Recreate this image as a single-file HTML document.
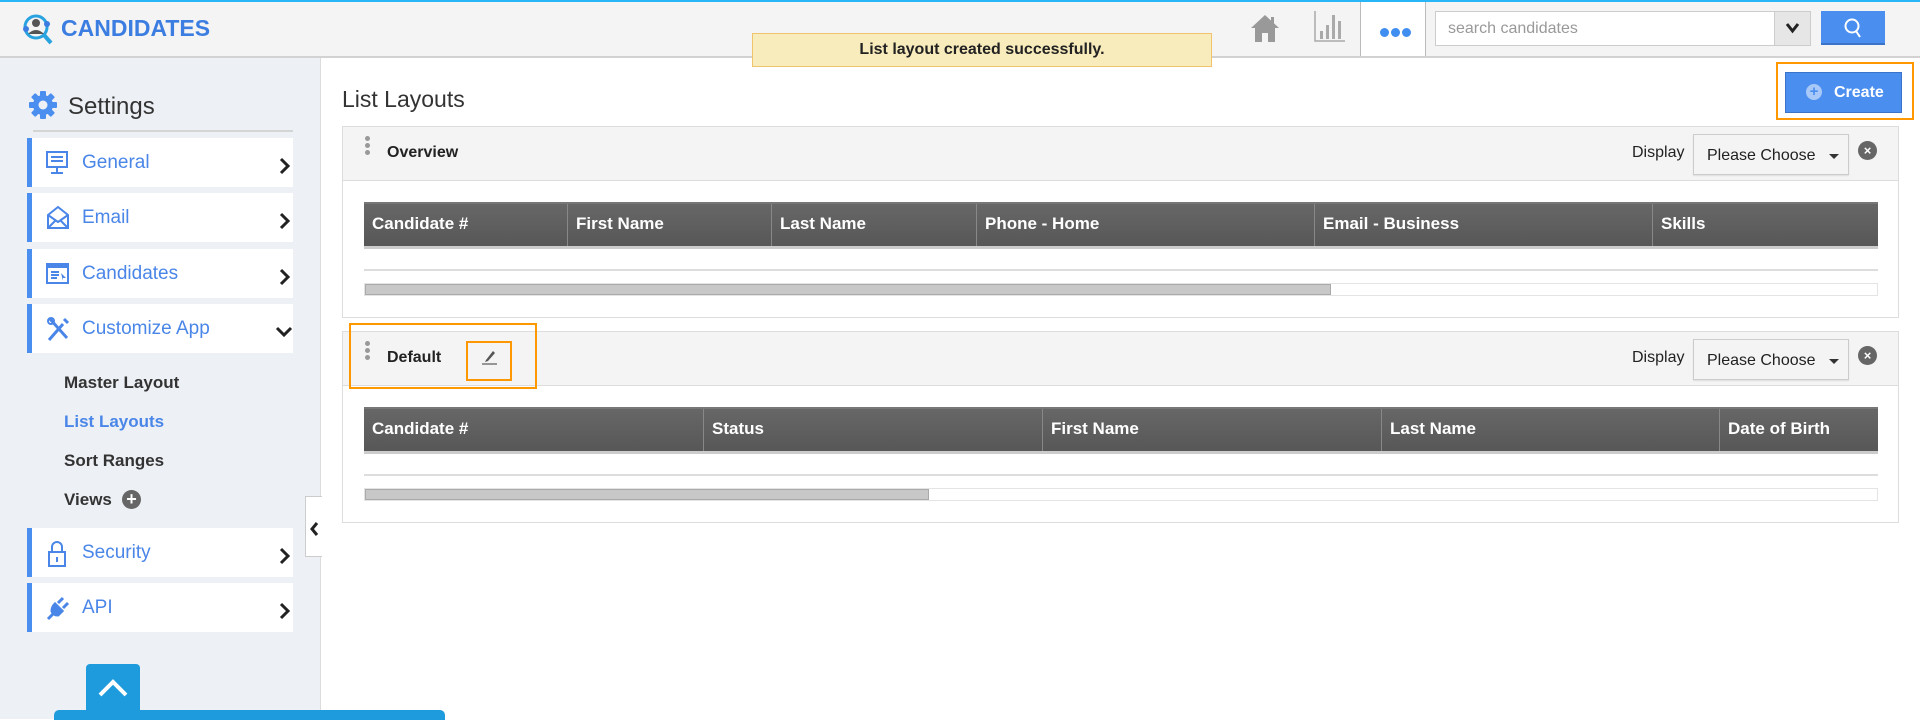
<!DOCTYPE html>
<html><head><meta charset="utf-8"><style>
*{box-sizing:border-box;margin:0;padding:0}
body{width:1920px;height:719px;overflow:hidden;background:#fff;font-family:"Liberation Sans",Arial,sans-serif;position:relative}
.a{position:absolute}
.hdr{left:0;top:0;width:1920px;height:58px;background:#f4f4f4;border-top:2px solid #29b6f6;border-bottom:2px solid #d2d2d2}
.side{left:0;top:58px;width:321px;height:661px;background:#edf0f5;border-right:1px solid #dcdcdc}
.mi{left:27px;width:266px;height:49px;background:#fff;border-left:5px solid #4a8ef0;color:#4a86e8;font-size:19px}
.mi span{position:absolute;left:50px;top:14px}
.mi svg.ic{position:absolute;left:14px;top:12px}
.mi .chev{position:absolute;left:247px;top:19px}
.sub{left:64px;font-size:17px;font-weight:bold;color:#333}
.panel{left:342px;width:1557px;border:1px solid #ddd;background:#fff}
.ph{position:absolute;left:0;top:0;width:100%;height:54px;background:#f4f4f4;border-bottom:1px solid #ddd}
.th{position:absolute;left:21px;width:1514px;height:47px;background:linear-gradient(#676767,#575757);border-top:2px solid #777;border-bottom:3px solid #ccc}
.th div{position:absolute;top:0;height:42px;color:#fff;font-weight:bold;font-size:17px;line-height:40px;padding-left:8px;border-left:1px solid #888}
.sel{position:absolute;width:156px;height:41px;border:1px solid #ccc;background:#f4f4f4;font-size:16px;color:#222;padding:12px 0 0 13px;box-shadow:0 1px 1px #ddd}
.sel:after{content:"";position:absolute;right:9px;top:19px;border:5px solid transparent;border-top:5px solid #333}
.disp{position:absolute;font-size:16px;color:#222}
.xc{position:absolute;width:19px;height:19px;border-radius:50%;background:#666;color:#fff;font-size:13px;font-weight:bold;text-align:center;line-height:19px}
.dots{position:absolute;left:22px;width:5px}
.dots i{display:block;width:5px;height:5px;border-radius:50%;background:#999;margin-bottom:2px}
.ptitle{position:absolute;left:44px;font-size:16px;font-weight:bold;color:#222}
.ln{position:absolute;left:21px;width:1514px;height:2px;background:#ddd}
.sb{position:absolute;left:21px;width:1514px;height:13px;border:1px solid #e4e4e4;background:#fff}
.sb i{position:absolute;left:0;top:0;height:11px;background:#c8c8c8;border:1px solid #aaa}
</style></head><body>
<div class="a hdr"></div>
<svg class="a" style="left:20px;top:12px" width="36" height="34" viewBox="0 0 36 34"><circle cx="16" cy="15" r="11" fill="none" stroke="#29a3e0" stroke-width="3"/><circle cx="16" cy="11" r="4" fill="#555"/><path d="M8 22 Q16 14 24 22Z" fill="#555"/><line x1="24" y1="23" x2="31" y2="31" stroke="#29a3e0" stroke-width="4"/><circle cx="6" cy="17" r="3" fill="#3b7de0"/><circle cx="27" cy="12" r="3" fill="#3b7de0"/></svg>
<div class="a" style="left:61px;top:15px;font-size:23px;font-weight:bold;color:#3b7de0">CANDIDATES</div>
<div class="a" style="left:752px;top:33px;width:460px;height:34px;background:#f9ecbc;border:1px solid #f0c36d;font-size:16px;font-weight:bold;color:#222;text-align:center;line-height:32px">List layout created successfully.</div>
<svg class="a" style="left:1249px;top:13px" width="32" height="30" viewBox="0 0 32 30"><path d="M16 2 L30 15 H26 V29 H19 V20 H13 V29 H6 V15 H2 Z" fill="#999"/><rect x="22" y="4" width="3" height="7" fill="#999"/></svg>
<svg class="a" style="left:1314px;top:11px" width="32" height="32" viewBox="0 0 32 32"><path d="M1 0 V30 H31" fill="none" stroke="#aaa" stroke-width="1.5"/><rect x="6" y="20" width="3" height="8" fill="#aaa"/><rect x="12" y="14" width="3" height="14" fill="#aaa"/><rect x="18" y="4" width="3" height="24" fill="#aaa"/><rect x="24" y="10" width="3" height="18" fill="#aaa"/></svg>
<div class="a" style="left:1360px;top:2px;width:66px;height:54px;background:#fff;border-left:1px solid #bbb;border-right:1px solid #bbb"></div>
<div class="a" style="left:1380px;top:24px"><span style="display:inline-block;width:9px;height:9px;border-radius:50%;background:#3f8ef0;margin-right:2px"></span><span style="display:inline-block;width:9px;height:9px;border-radius:50%;background:#3f8ef0;margin-right:2px"></span><span style="display:inline-block;width:9px;height:9px;border-radius:50%;background:#3f8ef0"></span></div>
<div class="a" style="left:1435px;top:11px;width:340px;height:35px;background:#fff;border:1px solid #ccc;font-size:16px;color:#999;padding:8px 12px">search candidates</div>
<div class="a" style="left:1774px;top:11px;width:37px;height:35px;background:#e6e6e6;border:1px solid #ccc"></div>
<svg class="a" style="left:1785px;top:22px" width="15" height="12" viewBox="0 0 15 12"><path d="M2 2 L7.5 9 L13 2" fill="none" stroke="#222" stroke-width="3"/></svg>
<div class="a" style="left:1821px;top:11px;width:64px;height:34px;background:#4a8ef0;border-bottom:2px solid #3a73c8"></div>
<svg class="a" style="left:1843px;top:17px" width="20" height="22" viewBox="0 0 20 22"><circle cx="9" cy="9" r="6.5" fill="none" stroke="#fff" stroke-width="2"/><line x1="13" y1="14" x2="17" y2="20" stroke="#fff" stroke-width="2"/></svg>

<div class="a side"></div>
<svg class="a" style="left:28px;top:90px" width="30" height="30" viewBox="0 0 30 30"><g fill="#4a8ef0"><circle cx="15" cy="15" r="10"/><rect x="12" y="1" width="6" height="28" rx="1"/><rect x="1" y="12" width="28" height="6" rx="1"/><rect x="12" y="1" width="6" height="28" rx="1" transform="rotate(45 15 15)"/><rect x="12" y="1" width="6" height="28" rx="1" transform="rotate(-45 15 15)"/></g><circle cx="15" cy="15" r="4.5" fill="#edf0f5"/></svg>
<div class="a" style="left:68px;top:93px;font-size:24px;color:#333">Settings</div>
<div class="a" style="left:33px;top:130px;width:260px;height:2px;background:#d4d4d4"></div>

<div class="a mi" style="top:138px"><svg class="ic" width="22" height="26" viewBox="0 0 22 26"><rect x="1" y="2" width="20" height="15" fill="none" stroke="#4a86e8" stroke-width="2"/><path d="M5 7H17M5 11H17M11 17V23M5 23H17" stroke="#4a86e8" stroke-width="2"/></svg><span>General</span><svg class="chev" width="12" height="18" viewBox="0 0 12 18"><path d="M2 2 L9 9 L2 16" fill="none" stroke="#222" stroke-width="3"/></svg></div>
<div class="a mi" style="top:193px"><svg class="ic" width="24" height="26" viewBox="0 0 24 26"><path d="M2 10 L12 2 L22 10 V23 H2 Z M2 10 L12 17 L22 10 M2 23 L10 15 M22 23 L14 15" fill="none" stroke="#4a86e8" stroke-width="2"/></svg><span>Email</span><svg class="chev" width="12" height="18" viewBox="0 0 12 18"><path d="M2 2 L9 9 L2 16" fill="none" stroke="#222" stroke-width="3"/></svg></div>
<div class="a mi" style="top:249px"><svg class="ic" width="24" height="26" viewBox="0 0 24 26"><rect x="1" y="3" width="21" height="19" fill="none" stroke="#4a86e8" stroke-width="2"/><rect x="1" y="3" width="21" height="4" fill="#4a86e8"/><path d="M5 11H13M5 14H13M5 17H11" stroke="#4a86e8" stroke-width="2"/><path d="M15 12 L20 17 L17 17 L17 20Z" fill="#4a86e8"/></svg><span>Candidates</span><svg class="chev" width="12" height="18" viewBox="0 0 12 18"><path d="M2 2 L9 9 L2 16" fill="none" stroke="#222" stroke-width="3"/></svg></div>
<div class="a mi" style="top:304px"><svg class="ic" width="24" height="26" viewBox="0 0 24 26"><path d="M3 24 L17 8 M4 3 L21 22 M18 3 L22 7" stroke="#4a86e8" stroke-width="3" fill="none"/><circle cx="5" cy="5" r="3" fill="none" stroke="#4a86e8" stroke-width="2"/></svg><span>Customize App</span><svg class="chev" style="left:243px;top:22px" width="18" height="12" viewBox="0 0 18 12"><path d="M2 2 L9 9 L16 2" fill="none" stroke="#222" stroke-width="3"/></svg></div>

<div class="a sub" style="top:373px">Master Layout</div>
<div class="a sub" style="top:412px;color:#4a86e8">List Layouts</div>
<div class="a sub" style="top:451px">Sort Ranges</div>
<div class="a sub" style="top:490px">Views</div>
<div class="a" style="left:122px;top:490px;width:19px;height:19px;border-radius:50%;background:#666;color:#fff;font-weight:bold;font-size:18px;text-align:center;line-height:19px">+</div>

<div class="a mi" style="top:528px"><svg class="ic" width="22" height="28" viewBox="0 0 22 28"><path d="M6 12 V7 A5 5 0 0 1 16 7 V12" fill="none" stroke="#4a86e8" stroke-width="2"/><rect x="3" y="12" width="16" height="14" fill="none" stroke="#4a86e8" stroke-width="2"/><path d="M11 17V22" stroke="#4a86e8" stroke-width="2"/></svg><span>Security</span><svg class="chev" width="12" height="18" viewBox="0 0 12 18"><path d="M2 2 L9 9 L2 16" fill="none" stroke="#222" stroke-width="3"/></svg></div>
<div class="a mi" style="top:583px"><svg class="ic" width="24" height="26" viewBox="0 0 24 26"><path d="M2 24 L8 18 M9 9 L16 16 L12 20 Q7 20 6 16 Q6 12 9 9 Z M12 8 L17 3 M17 13 L22 8" stroke="#4a86e8" stroke-width="3" fill="#4a86e8"/></svg><span>API</span><svg class="chev" width="12" height="18" viewBox="0 0 12 18"><path d="M2 2 L9 9 L2 16" fill="none" stroke="#222" stroke-width="3"/></svg></div>

<div class="a" style="left:305px;top:496px;width:17px;height:61px;background:#fff;border:1px solid #ccc;border-right:none"></div>
<svg class="a" style="left:309px;top:521px" width="10" height="16" viewBox="0 0 10 16"><path d="M8 2 L3 8 L8 14" fill="none" stroke="#222" stroke-width="3"/></svg>
<div class="a" style="left:86px;top:664px;width:54px;height:50px;background:#1e9bdc;border-radius:4px 4px 0 0"></div>
<svg class="a" style="left:97px;top:678px" width="32" height="20" viewBox="0 0 32 20"><path d="M3 17 L16 4 L29 17" fill="none" stroke="#fff" stroke-width="4"/></svg>
<div class="a" style="left:54px;top:710px;width:391px;height:10px;background:#1e9bdc;border-radius:5px 5px 0 0"></div>

<div class="a" style="left:342px;top:86px;font-size:23px;color:#333">List Layouts</div>
<div class="a" style="left:1776px;top:62px;width:138px;height:58px;border:2px solid #ff9800"></div>
<div class="a" style="left:1785px;top:72px;width:117px;height:41px;background:#4a8ef0;border:1px solid #3a73c8;color:#fff;font-weight:bold;font-size:16px;padding:11px 0 0 48px">Create</div>
<div class="a" style="left:1806px;top:84px;width:16px;height:16px;border-radius:50%;background:#a8c8f8;color:#4a8ef0;font-size:15px;font-weight:bold;text-align:center;line-height:16px">+</div>

<div class="a panel" style="top:126px;height:192px">
 <div class="ph"><div class="dots" style="top:9px"><i></i><i></i><i></i></div><div class="ptitle" style="top:17px">Overview</div>
 <div class="disp" style="left:1289px;top:17px">Display</div><div class="sel" style="left:1350px;top:7px">Please Choose</div><div class="xc" style="left:1515px;top:14px">×</div></div>
 <div class="th" style="top:75px"><div style="left:0;border:none;width:203px">Candidate #</div><div style="left:203px">First Name</div><div style="left:407px">Last Name</div><div style="left:612px">Phone - Home</div><div style="left:950px">Email - Business</div><div style="left:1288px">Skills</div></div>
 <div class="ln" style="top:142px"></div>
 <div class="sb" style="top:156px"><i style="width:966px"></i></div>
</div>

<div class="a panel" style="top:331px;height:192px">
 <div class="ph"><div class="dots" style="top:9px"><i></i><i></i><i></i></div><div class="ptitle" style="top:17px">Default</div>
 <svg style="position:absolute;left:137px;top:15px" width="20" height="20" viewBox="0 0 20 20"><path d="M6 13 L13 4 L15 6 L8 14 L5 15 Z" fill="#555"/><path d="M2 17 H17" stroke="#777" stroke-width="1.5"/></svg>
 <div class="disp" style="left:1289px;top:17px">Display</div><div class="sel" style="left:1350px;top:7px">Please Choose</div><div class="xc" style="left:1515px;top:14px">×</div></div>
 <div class="th" style="top:75px"><div style="left:0;border:none;width:339px">Candidate #</div><div style="left:339px">Status</div><div style="left:678px">First Name</div><div style="left:1017px">Last Name</div><div style="left:1355px">Date of Birth</div></div>
 <div class="ln" style="top:142px"></div>
 <div class="sb" style="top:156px"><i style="width:564px"></i></div>
</div>
<div class="a" style="left:349px;top:323px;width:188px;height:66px;border:2px solid #ff9800"></div>
<div class="a" style="left:466px;top:341px;width:46px;height:40px;border:2px solid #ff9800"></div>
</body></html>
